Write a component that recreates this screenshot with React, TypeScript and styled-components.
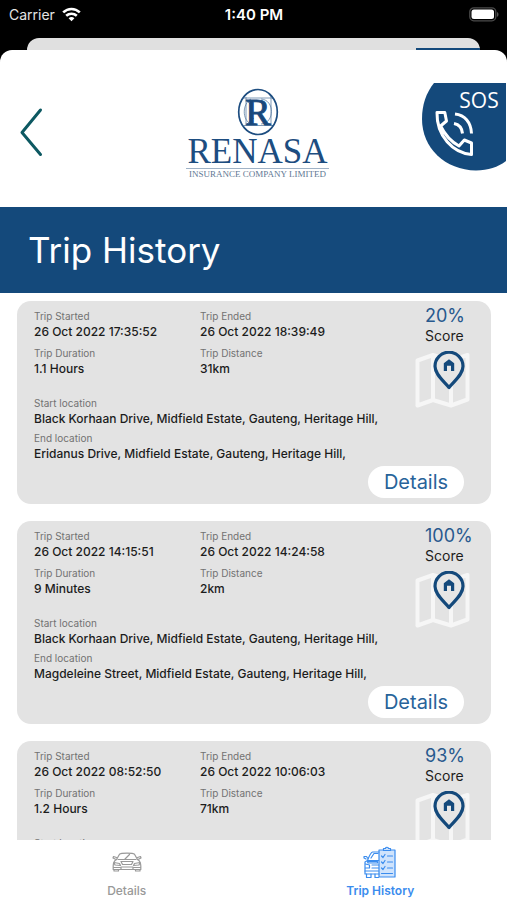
import React from "react";
import styled, { createGlobalStyle } from "styled-components";

const navy = "#14497b";

const GlobalStyle = createGlobalStyle`
  * { box-sizing: border-box; }
  body { margin: 0; background: #000; font-family: Inter, "Liberation Sans", sans-serif; }
  button { font: inherit; border: 0; padding: 0; background: none; cursor: pointer; }
`;

const Screen = styled.div`
  display: flex;
  flex-direction: column;
  height: 100vh;
  background: #000;
  overflow: hidden;
`;

const StatusBar = styled.div`
  display: grid;
  grid-template-columns: 1fr auto 1fr;
  align-items: center;
  height: 28px;
  margin-bottom: 10px;
  padding: 0 8px 0 9px;
  color: #fff;
  font-size: 14px;
  svg { display: block; }
`;

const Carrier = styled.div`
  display: flex;
  align-items: center;
  gap: 7px;
  color: #e4e4e4;
`;

const Clock = styled.time`
  font-size: 15px;
  font-weight: 600;
`;

const Battery = styled.div`
  justify-self: end;
`;

const PreviousSheet = styled.div`
  display: flex;
  justify-content: flex-end;
  align-items: flex-end;
  flex: none;
  height: 12px;
  margin: 0 27px;
  border-radius: 20px 20px 0 0;
  background: #e0e0e0;
  overflow: hidden;
`;

const PreviousBadge = styled.div`
  width: 64px;
  height: 2px;
  background: ${navy};
`;

const Sheet = styled.main`
  display: flex;
  flex-direction: column;
  flex: 1;
  min-height: 0;
  border-radius: 12px 12px 0 0;
  background: #fff;
  overflow: hidden;
`;

const Header = styled.header`
  display: grid;
  grid-template-columns: 1fr auto 1fr;
  align-items: start;
  flex: none;
  height: 157px;
  padding: 33px 0 0 8px;
  svg { display: block; }
`;

const BackButton = styled.button`
  justify-self: start;
  margin: 24px 0 0 10px;
`;

const Logo = styled.div`
  display: flex;
  flex-direction: column;
  align-items: center;
  padding-top: 5px;
  color: #1d4d80;
  font-family: "Liberation Serif", serif;
`;

const LogoName = styled.div`
  font-size: 35px;
  line-height: 32px;
`;

const LogoTagline = styled.div`
  padding: 0 3px;
  border-top: 1px solid #9fb2c6;
  color: #5f7893;
  font-size: 9px;
  line-height: 10px;
  white-space: nowrap;
`;

const SosButton = styled.button`
  justify-self: end;
  margin-right: 1px;
`;

const TitleBar = styled.div`
  display: flex;
  align-items: center;
  flex: none;
  height: 86px;
  padding: 0 28px;
  background: ${navy};
`;

const Title = styled.h1`
  margin: 0;
  color: #fff;
  font-size: 35px;
  font-weight: 400;
  line-height: 44px;
`;

const TripList = styled.ul`
  display: flex;
  flex-direction: column;
  flex: 1;
  gap: 17px;
  min-height: 0;
  margin: 0;
  padding: 8px 16px 16px 17px;
  list-style: none;
  overflow-y: auto;
  scrollbar-width: none;
`;

const Card = styled.li`
  flex: none;
  padding: 8px 11px 6px 17px;
  border-radius: 14px;
  background: #e3e3e3;
`;

const CardTop = styled.div`
  display: flex;
  justify-content: space-between;
`;

const Info = styled.div`
  flex: 1;
  min-width: 0;
`;

const Label = styled.dt`
  color: #727272;
  font-size: 10px;
  line-height: 14px;
`;

const Value = styled.dd`
  margin: 0;
  color: #1c1c1c;
  font-size: 12px;
  font-weight: 500;
  line-height: 18px;
  white-space: nowrap;
`;

const Facts = styled.dl`
  display: grid;
  grid-template-columns: 166px 1fr;
  row-gap: 5px;
  margin: 0;
`;

const Places = styled.dl`
  display: grid;
  row-gap: 3px;
  margin: 18px 0 0;
`;

const ScorePanel = styled.div`
  flex: none;
  width: 66px;
  margin-top: -4px;
  svg { display: block; margin-top: 6px; }
`;

const Percent = styled.div`
  padding-left: 11px;
  color: #28598e;
  font-size: 18px;
  line-height: 22px;
`;

const ScoreLabel = styled.div`
  padding-left: 11px;
  color: #1c1c1c;
  font-size: 14px;
  line-height: 18px;
`;

const DetailsButton = styled.button`
  && {
    display: block;
    width: 96px;
    margin: 3px 16px 0 auto;
    border-radius: 16px;
    background: #fff;
    color: #28639a;
    font-size: 20px;
    line-height: 32px;
  }
`;

const TabBar = styled.nav`
  display: grid;
  grid-template-columns: 1fr 1fr;
  flex: none;
  height: 60px;
  background: #fff;
`;

const Tab = styled.button<{ $active?: boolean }>`
  && {
    display: flex;
    flex-direction: column;
    align-items: center;
    justify-content: space-between;
    padding: 6px 0 1px;
    color: ${(p) => (p.$active ? "#3a8cee" : "#999")};
    font-size: 12px;
    font-weight: ${(p) => (p.$active ? 600 : 500)};
    line-height: 16px;
  }
`;

const WifiIcon = () => (
  <svg width="19" height="15" viewBox="0 0 19 15" fill="none" stroke="#fff" strokeWidth="2.6" aria-hidden="true">
    <path d="M1.2 5.4C6 .8 13 .8 17.8 5.4" />
    <path d="M4.2 8.8c3-2.8 7.600-2.800 10.600 0" />
    <path d="M9.500 14.200 6.600 11.200c1.700-1.500 4.100-1.500 5.800 0z" fill="#fff" stroke="none" />
  </svg>
);

const BatteryIcon = () => (
  <svg width="30" height="15" viewBox="0 0 30 15" aria-hidden="true">
    <rect x=".8" y=".8" width="26" height="13" rx="4" fill="none" stroke="#4b4b4b" strokeWidth="1.300" />
    <rect x="2.500" y="2.500" width="22.500" height="9.600" rx="2.500" fill="#fff" />
    <path d="M28 5c2 .8 2 4 0 4.800z" fill="#555" />
  </svg>
);

const BackIcon = () => (
  <svg width="26" height="50" viewBox="0 0 26 50" fill="none" stroke="#0d5962" strokeWidth="3" strokeLinecap="round" strokeLinejoin="round" aria-hidden="true">
    <path d="M22.500 3 4 25.500 22.500 47.500" />
  </svg>
);

const Emblem = () => (
  <svg width="42" height="48" viewBox="0 0 42 48" fill="none" stroke="#1d4d80" aria-hidden="true">
    <ellipse cx="21" cy="24" rx="19.300" ry="22.500" strokeWidth="1.700" />
    <g strokeWidth=".8" opacity=".7">
      <path d="M24 11C38 12 38 35 24 36M14 11C5 16 5 32 14 36M7 10H36M7 37.500H36M9 9V38M34 9V38M31 5 34 9" />
      <path d="M10 36 17 30M9 12 15 18" />
    </g>
    <text x="21" y="37" fill="#17477b" strokeWidth="1.100" textAnchor="middle" fontFamily="Liberation Serif, serif" fontSize="38">R</text>
  </svg>
);

const SosIcon = () => (
  <svg width="84" height="88" viewBox="0 0 84 88" aria-hidden="true">
    <path d="M12 0H84V78C76 84 66 87.500 54 87.500 23 87 0 65 0 36 0 22 4 10 12 0Z" fill={navy} />
    <g fill="none" stroke="#fff" strokeWidth="3" strokeLinejoin="round">
      <path d="M15 29.500H22.800L24.500 38 18.600 43C23 52 29 58.500 37 63L42.300 57 49.500 60V71.500C31 70 14.500 53 15 29.500Z" />
      <path d="M32 40.500C37 41.500 40 45 40.500 50.500" />
      <path d="M33 31C43 32 49 39.500 49.500 50.500" />
    </g>
    <text x="57" y="25" textAnchor="middle" fill="#fff" fontFamily="Open Sans, Noto Sans, sans-serif" fontSize="21">SOS</text>
  </svg>
);

const MapIcon = () => (
  <svg width="57" height="58" viewBox="0 0 57 58" fill="none" strokeLinejoin="round" aria-hidden="true">
    <g stroke="#f6f6f6" strokeWidth="4">
      <path d="M3.500 9.500 19 4 37 9.500 53.500 4V48.500L37 54.500 19 49 3.500 54.500Z" />
      <path d="M19 4V49M37 9V54" />
    </g>
    <path d="M35 36.500C31 31 21 24 21 15.200A14 14 0 0 1 49 15.200C49 24 39 31 35 36.500Z" fill="#e6e6e6" stroke={navy} strokeWidth="3.200" />
    <path d="M29.800 20V12.300L35 8.200 40.200 12.300V20H37V14.800H33V20Z" fill={navy} />
  </svg>
);

const CarIcon = () => (
  <svg width="32" height="32" viewBox="0 0 32 32" fill="none" stroke="currentColor" strokeWidth="1.200" strokeLinejoin="round" strokeLinecap="round" aria-hidden="true">
    <path d="M5.500 13.500 8.500 8.200C10 6.800 22 6.800 23.500 8.200L26.500 13.500" />
    <path d="M7 13.500H25M14 13 18.500 8.500" />
    <path d="M5.500 11.500 2.500 10.500 2 12 4.500 13.200M26.500 11.500 29.500 10.500 30 12 27.500 13.200" />
    <path d="M5.500 13.500C2.500 15 2.200 17 2.200 20V23.500H29.800V20C29.800 17 29.500 15 26.500 13.500" />
    <path d="M3 16.500 8.500 17.500 9.500 19.500 4 19ZM29 16.500 23.500 17.500 22.500 19.500 28 19Z" />
    <path d="M10 15.500H22L20.500 18.500H11.500ZM10 21H22V23.500H10ZM3 23.500V25H7.500V23.500M24.500 23.500V25H29V23.500M2.500 21.500H9M23 21.500H29.500" />
  </svg>
);

const TripIcon = () => (
  <svg width="34" height="34" viewBox="0 0 34 34" fill="none" stroke="currentColor" strokeWidth="1.200" strokeLinejoin="round" strokeLinecap="round" aria-hidden="true">
    <g fill="#cfe3fc">
      <path d="M16 4H32V31H16Z" />
      <path d="M20.500 4.500V2.500H22.500C22.500 .8 25.500 .8 25.500 2.500H27.500V4.500Z" />
    </g>
    <path d="M18.500 10 20 11.500 22 8.500M24.500 10H29.500M18.500 16 20 17.500 22 14.500M24.500 16H29.500M18.500 22 20 23.500 22 20.500M24.500 22H29.500M18.500 27.500H29.500" />
    <path d="M16 6H9.500C7.500 6.500 6 10.500 4.500 14.500L2 16V28H16M5 14.500H15.500M8 12 11 7.500H15M3 13 1 12V10.500H3.500L4.500 12" />
    <path d="M2.500 18 6.500 19V22H2.500M9 19H15.500M9 22H15.500M2 25H15.500M3.500 28V31.500H8V28M12 28V31.500H15.500" />
    <path d="M4.500 15.500H14.500V17H5Z" fill="#cfe3fc" />
  </svg>
);

interface Trip {
  started: string;
  ended: string;
  duration: string;
  distance: string;
  from: string;
  to: string;
  score: number;
}

const korhaan = "Black Korhaan Drive, Midfield Estate, Gauteng, Heritage Hill,";

const trips: Trip[] = [
  { started: "26 Oct 2022 17:35:52", ended: "26 Oct 2022 18:39:49", duration: "1.1 Hours", distance: "31km", from: korhaan, to: "Eridanus Drive, Midfield Estate, Gauteng, Heritage Hill,", score: 20 },
  { started: "26 Oct 2022 14:15:51", ended: "26 Oct 2022 14:24:58", duration: "9 Minutes", distance: "2km", from: korhaan, to: "Magdeleine Street, Midfield Estate, Gauteng, Heritage Hill,", score: 100 },
  { started: "26 Oct 2022 08:52:50", ended: "26 Oct 2022 10:06:03", duration: "1.2 Hours", distance: "71km", from: korhaan, to: korhaan, score: 93 },
];

const Field = ({ label, value }: { label: string; value: string }) => (
  <div>
    <Label>{label}</Label>
    <Value>{value}</Value>
  </div>
);

const TripCard = ({ trip }: { trip: Trip }) => (
  <Card>
    <CardTop>
      <Info>
        <Facts>
          <Field label="Trip Started" value={trip.started} />
          <Field label="Trip Ended" value={trip.ended} />
          <Field label="Trip Duration" value={trip.duration} />
          <Field label="Trip Distance" value={trip.distance} />
        </Facts>
        <Places>
          <Field label="Start location" value={trip.from} />
          <Field label="End location" value={trip.to} />
        </Places>
      </Info>
      <ScorePanel>
        <Percent>{trip.score}%</Percent>
        <ScoreLabel>Score</ScoreLabel>
        <MapIcon />
      </ScorePanel>
    </CardTop>
    <DetailsButton type="button">Details</DetailsButton>
  </Card>
);

export default function App() {
  return (
    <Screen>
      <GlobalStyle />
      <StatusBar>
        <Carrier>Carrier <WifiIcon /></Carrier>
        <Clock>1:40 PM</Clock>
        <Battery><BatteryIcon /></Battery>
      </StatusBar>
      <PreviousSheet><PreviousBadge /></PreviousSheet>
      <Sheet>
        <Header>
          <BackButton type="button" aria-label="Back"><BackIcon /></BackButton>
          <Logo>
            <Emblem />
            <LogoName>RENASA</LogoName>
            <LogoTagline>INSURANCE COMPANY LIMITED</LogoTagline>
          </Logo>
          <SosButton type="button" aria-label="SOS call"><SosIcon /></SosButton>
        </Header>
        <TitleBar><Title>Trip History</Title></TitleBar>
        <TripList>
          {trips.map((trip) => <TripCard key={trip.started} trip={trip} />)}
        </TripList>
        <TabBar>
          <Tab type="button"><CarIcon />Details</Tab>
          <Tab type="button" $active aria-current="page"><TripIcon />Trip History</Tab>
        </TabBar>
      </Sheet>
    </Screen>
  );
}
